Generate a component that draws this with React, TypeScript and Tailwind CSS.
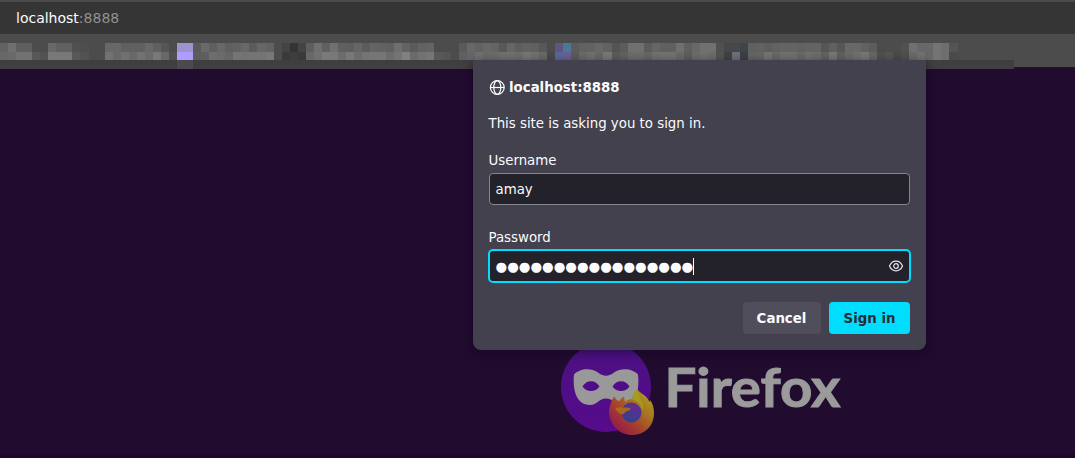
import React from "react";

const upper =
  "62 6f 5f 5f . . 68 60 60 50 4e . . 68 68 60 60 60 68 60 55 . 9f92cf 9f92cf 5a 6a 5f 68 5f 62 68 5c 66 62 . 44 34 44 5e 6f 60 70 60 5e 66 5c 64 62 60 6e 62 5a 62 64 . . . 5a 68 62 68 64 58 66 5e 62 60 58 . 5a5880 4c7898 5c 62 62 68 62 54 5c 70 70 5c 66 60 60 70 60 68 70 70 50 44484a 44484c 3e4448 60 62 5e 62 64 64 62 64 64 56 60 56 68 68 62 5c . . . 50 70 68 68 74 6e 54".split(" ");
const lower =
  "68 6a 72 72 58 52 78 78 78 58 52 . . 72 68 70 68 72 6a 78 68 50 af9dfb af9dfb 5c 5f 6e 6a 66 74 72 74 74 78 . 3a 3e 3a 68 70 7a 78 6c 78 6c 74 76 76 6c 74 80 6a 72 76 58 54 4c 60 66 70 6a 6c 70 70 6e 76 70 68 4a 5c689c 6c6094 5c 6a 70 68 78 5c 62 6c 6c 66 70 72 72 6a 5e 6c 70 6c 54 42 6c7078 3c4044 64 66 74 68 70 70 68 70 6c 62 76 60 6a 70 76 66 50 56 4a 50 6a 72 68 74 6e 4a".split(" ");

function tone(value: string) {
  if (value === ".") return "#4c4c4c";
  return value.length === 2 ? `#${value.repeat(3)}` : `#${value}`;
}

function Bookmarks({ cells, className }: { cells: string[]; className: string }) {
  return (
    <div className={`grid w-[957.5px] grid-cols-[repeat(119,minmax(0,1fr))] ${className}`}>
      {cells.map((cell, i) => (
        <span key={i} style={{ backgroundColor: tone(cell) }} />
      ))}
    </div>
  );
}

function GlobeIcon() {
  return (
    <svg className="size-4 shrink-0" viewBox="0 0 16 16" fill="none" stroke="#fbfbfe" strokeWidth="1.2">
      <circle cx="8.3" cy="7.5" r="6.9" />
      <ellipse cx="8.3" cy="7.5" rx="3.5" ry="6.9" />
      <path d="M1.500 7.500h13.600" />
    </svg>
  );
}

function EyeIcon() {
  return (
    <svg className="size-4 shrink-0" viewBox="0 0 16 16" fill="none" stroke="#e5e5ea" strokeWidth="1.2">
      <path d="M1.5 8C2.7 5.2 5 3.2 8 3.2s5.3 2 6.5 4.8c-1.2 2.8-3.5 4.8-6.5 4.8S2.7 10.8 1.5 8Z" />
      <circle cx="8" cy="8" r="2.3" />
    </svg>
  );
}

function FirefoxBrand() {
  return (
    <svg className="h-[110px] w-[300px]" viewBox="550 340 300 110">
      <defs>
        <linearGradient id="disc" x1="0" y1="0" x2="0" y2="1">
          <stop offset="0" stopColor="#4a1180" />
          <stop offset="1" stopColor="#560b8c" />
        </linearGradient>
        <linearGradient id="flame" x1="0.9" y1="0.15" x2="0.2" y2="0.9">
          <stop offset="0" stopColor="#a99b24" />
          <stop offset="0.3" stopColor="#a9781e" />
          <stop offset="0.65" stopColor="#a5402a" />
          <stop offset="1" stopColor="#941d4a" />
        </linearGradient>
        <radialGradient id="globe" cx="0.65" cy="0.2" r="0.8">
          <stop offset="0" stopColor="#662b91" />
          <stop offset="1" stopColor="#34408d" />
        </radialGradient>
      </defs>
      <circle cx="606" cy="387" r="45" fill="url(#disc)" />
      <path
        d="M574 374.5C579 369 590 367 598 372.5c5 4.2 11 4.2 16 0 8-5.500 19-3.500 24 2 1.500 14-1 30.500-15 30.500-7 0-10-6.500-17-6.500s-9 6.500-16 6.500c-14 0-17.500-16-16-30.500Z"
        fill="#99999a"
      />
      <path d="M582.500 386.500c4-7 13-7 17 0-4 6-13 6-17 0ZM612.500 386.500c4-7 13-7 17 0-4 6-13 6-17 0Z" fill="#510d88" />
      <path
        d="M614.500 396.500c-2 2-3 4-3.500 6.500-3 6-2 13 0 18 4 9 12 14 21 14 13 0 21.500-9 22-21 0-6-1-10-4-14l-.5 2c-1-3-3-5-5.500-7-3-2-5.500-4-7-6-2.500 2.500-4.500 6-4.500 10-3 0-5.500 1-7.500 3l-1-5.500c-2 1-3.500 2.500-4.500 4.500-2.500-.5-4-2-5-4.500Z"
        fill="url(#flame)"
      />
      <path d="M637 389c-3 3-5 7-4.500 10.500 6 2 9.500 6 10 11 3-7-4-12-5.500-21.500Z" fill="#a59a22" />
      <circle cx="631.500" cy="412.500" r="10" fill="url(#globe)" />
      <path d="M615 408c4-1.500 8-.5 11-.5 1.500 0 3 .3 4.500.5 0 2-2 3-4.500 3.500-1.500 2-3 3-5 2.500-3-1-5-3.500-6-6Z" fill="#a96820" />
      <text
        x="664.5"
        y="407"
        fontFamily="Lato, sans-serif"
        fontWeight="700"
        fontSize="53"
        textLength="176"
        lengthAdjust="spacingAndGlyphs"
        fill="#9b9b9b"
        stroke="#9b9b9b"
        strokeWidth="1"
      >
        Firefox
      </text>
    </svg>
  );
}

function SignInDialog() {
  return (
    <section className="absolute left-[473px] top-[60px] flex h-[290px] w-[453px] flex-col rounded-b-lg bg-[#42414d] px-4 pt-[19px] text-[13.333px] leading-[18px] text-[#fbfbfe] shadow-[0_2px_10px_rgba(12,4,24,0.5)]">
      <h1 className="flex h-[18px] items-center gap-1 font-bold">
        <GlobeIcon />
        localhost:8888
      </h1>
      <p className="-ml-[0.5px] mt-[18px] h-[18px]">This site is asking you to sign in.</p>
      <label className="-ml-[0.5px] mt-[19px] h-[18px]">Username</label>
      <div className="mt-[3px] flex h-8 w-[421px] items-center rounded border border-[#84848f] bg-[#23222b] pl-[5.5px] pt-0.5">amay</div>
      <label className="-ml-[0.5px] mt-6 h-[18px]">Password</label>
      <div className="-ml-px mt-0.5 flex h-[34px] w-[423px] items-center rounded-[5px] border-2 border-[#00ddff] bg-[#23222b] pl-[5.5px] pr-[5px]">
        <span className="pt-0.5 text-[13.333px] leading-4">●●●●●●●●●●●●●●●●●</span>
        <span className="h-[17px] w-px bg-white" />
        <span className="ml-auto">
          <EyeIcon />
        </span>
      </div>
      <div className="mt-[19px] flex h-8 w-[421px] justify-end gap-2 font-bold">
        <button className="w-[78px] rounded bg-[#4f4e5a] pr-px pt-0.5">Cancel</button>
        <button className="w-[81px] rounded bg-[#00ddff] pt-0.5 text-[#2b2a33]">Sign in</button>
      </div>
    </section>
  );
}

export default function App() {
  return (
    <div className="relative flex h-[458px] w-[1075px] flex-col overflow-hidden bg-[#210b2f] font-['DejaVu_Sans',sans-serif]">
      <header className="flex h-[68px] shrink-0 flex-col border-b border-[#1e1a20] bg-[#4c4c4c]">
        <div className="mt-0.5 flex h-8 shrink-0 items-center bg-[#353535] px-4 text-[14px] text-[#fbfbfe]">
          localhost<span className="text-[#929292]">:8888</span>
        </div>
        <Bookmarks cells={upper} className="mt-[9px] h-[9px] shrink-0" />
        <Bookmarks cells={lower} className="h-2 shrink-0" />
        <div className="flex h-[9px] w-[1014px] shrink-0 bg-[#403e41]">
          <span className="ml-[177px] w-4 bg-[#4c4a50]" />
        </div>
      </header>
      <main className="flex h-[390px] flex-col justify-end border-b-4 border-[#1d0829] pb-1 pl-[550px]">
        <FirefoxBrand />
      </main>
      <SignInDialog />
    </div>
  );
}
